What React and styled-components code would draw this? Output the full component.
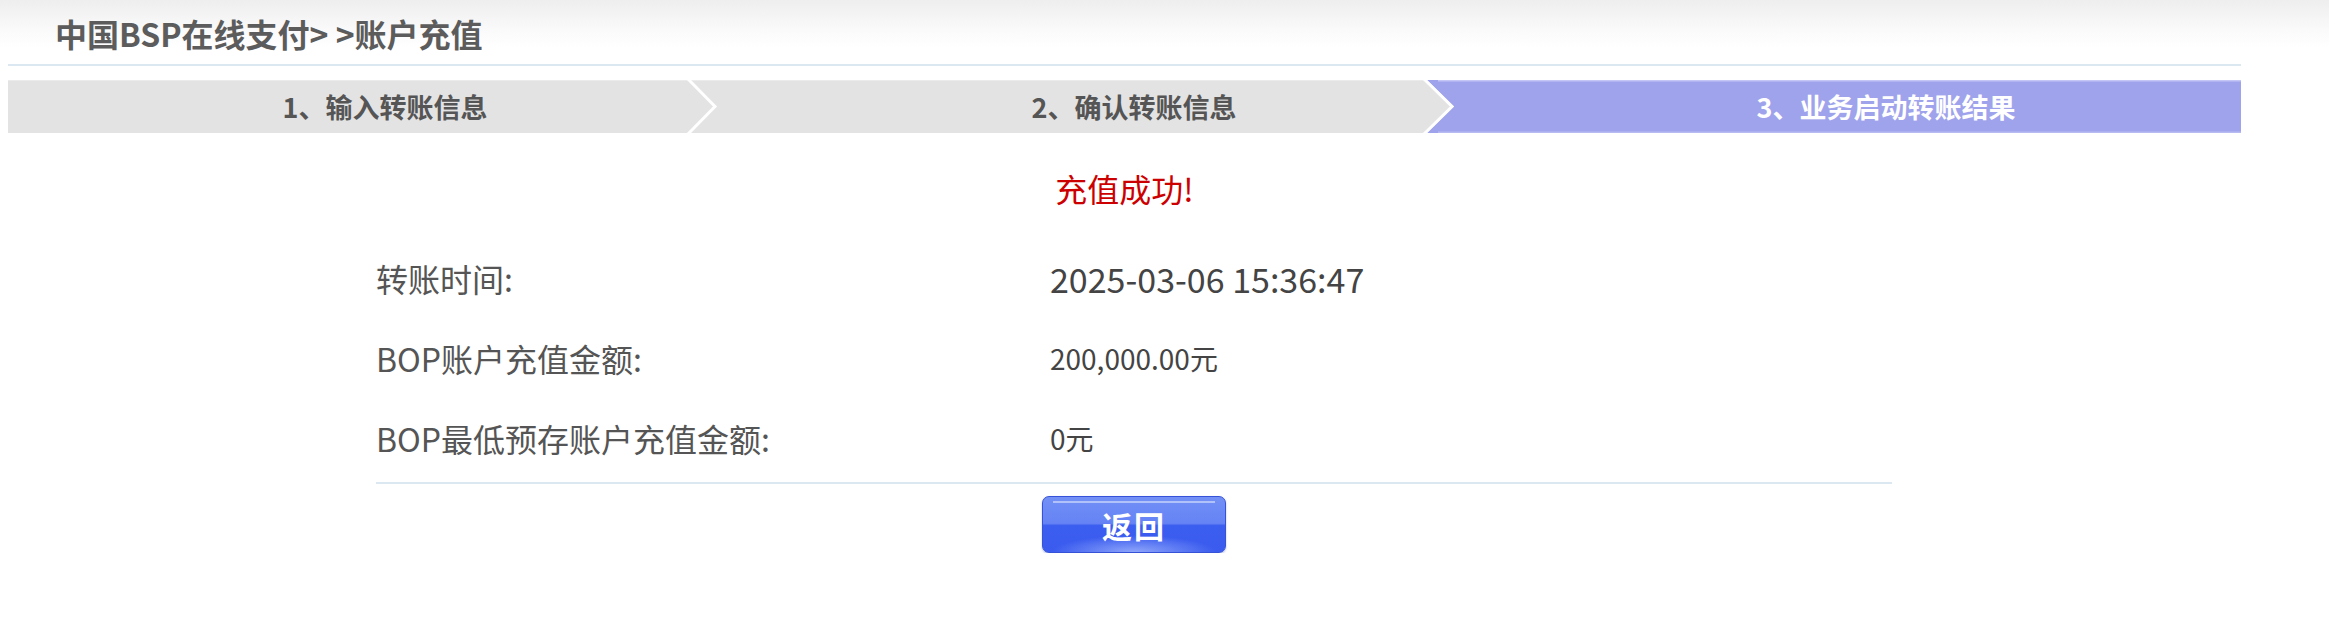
import React from 'react'
import styled, { createGlobalStyle } from 'styled-components'

const GlobalStyle = createGlobalStyle`
  html, body {
    margin: 0;
    padding: 0;
  }
  body {
    margin: 8px;
    background: linear-gradient(#eeeeee 0px, #fafafa 30px, #ffffff 48px) no-repeat;
    background-color: #fff;
    font-family: "Noto Sans CJK SC", "Noto Sans", sans-serif;
    color: #555;
  }
`

const steps = [
    { label: '1、输入转账信息' },
    { label: '2、确认转账信息' },
    { label: '3、业务启动转账结果', active: true },
]

const rows = [
    { label: '转账时间:', value: '2025-03-06 15:36:47', big: true },
    { label: 'BOP账户充值金额:', value: '200,000.00元' },
    { label: 'BOP最低预存账户充值金额:', value: '0元' },
]

function StepBackground() {
    return (
        <BarArt viewBox="0 0 2233 53" preserveAspectRatio="none">
            <rect x="0" y="0" width="2233" height="53" fill="#e3e3e3" />
            <rect x="0" y="0" width="2233" height="1" fill="#ebebeb" />
            <polygon points="1419,0 2233,0 2233,53 1419,53 1446,26.5" fill="#9fa3ec" />
            <rect x="1430" y="0" width="803" height="1.5" fill="#c4c6f5" />
            <rect x="1430" y="51.5" width="803" height="1.5" fill="#b8bbf2" />
            <polyline points="680,-1 707,26.5 680,54" fill="none" stroke="#fff" strokeWidth="3" />
            <polyline points="1416,-1 1444,26.5 1416,54" fill="none" stroke="#fff" strokeWidth="3" />
        </BarArt>
    )
}

function App() {
    return (
        <>
            <GlobalStyle />
            <Page>
                <Header>中国BSP在线支付&gt; &gt;账户充值</Header>
                <StepBar>
                    <StepBackground />
                    {steps.map((step) => (
                        <Step key={step.label} $active={step.active}>{step.label}</Step>
                    ))}
                </StepBar>
                <Message>充值成功!</Message>
                <ResultTable>
                    {rows.map((row) => (
                        <Row key={row.label}>
                            <Label>{row.label}</Label>
                            <Value $big={row.big}>{row.value}</Value>
                        </Row>
                    ))}
                </ResultTable>
                <Actions>
                    <BackButton type="button">返回</BackButton>
                </Actions>
            </Page>
        </>
    )
}

export default App

const Page = styled.div`
    width: 2233px;
`

const Header = styled.h1`
    margin: 0;
    height: 56px;
    line-height: 50px;
    padding-left: 47px;
    font-size: 32px;
    font-weight: 700;
    color: #5c5c5c;
    border-bottom: 2px solid #dbe8f1;
`

const StepBar = styled.div`
    position: relative;
    margin-top: 14px;
    height: 53px;
    padding-left: 25px;
    display: grid;
    grid-template-columns: 704px 794px 1fr;
    align-items: center;
`

const BarArt = styled.svg`
    position: absolute;
    inset: 0;
    width: 100%;
    height: 100%;
    z-index: 0;
`

const Step = styled.div`
    position: relative;
    z-index: 1;
    text-align: center;
    font-size: 27px;
    font-weight: 700;
    line-height: 53px;
    color: ${(p) => (p.$active ? '#ffffff' : '#555555')};
`

const Message = styled.div`
    margin-top: 31px;
    line-height: 48px;
    text-align: center;
    font-size: 32px;
    color: #cc0000;
`

const ResultTable = styled.div`
    margin: 26px 0 0 368px;
    width: 1516px;
    padding-bottom: 4px;
    border-bottom: 2px solid #dbe8f1;
`

const Row = styled.div`
    display: grid;
    grid-template-columns: 674px 1fr;
    align-items: center;
    height: 80px;
`

const Label = styled.span`
    font-size: 32px;
    color: #555;
`

const Value = styled.span`
    font-size: ${(p) => (p.$big ? '34px' : '28px')};
    color: #444;
`

const Actions = styled.div`
    margin: 12px 0 0 368px;
    width: 1516px;
    display: flex;
    justify-content: center;
`

const BackButton = styled.button`
    position: relative;
    width: 184px;
    height: 57px;
    border: 1px solid #3652d6;
    border-radius: 7px;
    background:
        radial-gradient(ellipse 45% 30% at 50% 100%, rgba(170, 190, 255, 0.75), rgba(170, 190, 255, 0)),
        linear-gradient(#7390f6 0%, #6583f4 48%, #3b5df0 52%, #3a5bee 100%);
    color: #fff;
    font-family: "Noto Sans CJK SC", sans-serif;
    font-size: 30px;
    font-weight: 700;
    letter-spacing: 2px;
    cursor: pointer;
    box-shadow: 0 1px 2px rgba(40, 60, 160, 0.35);

    &::before {
        content: '';
        position: absolute;
        top: 4px;
        left: 10px;
        right: 10px;
        height: 2px;
        background: rgba(220, 228, 255, 0.6);
    }
`
